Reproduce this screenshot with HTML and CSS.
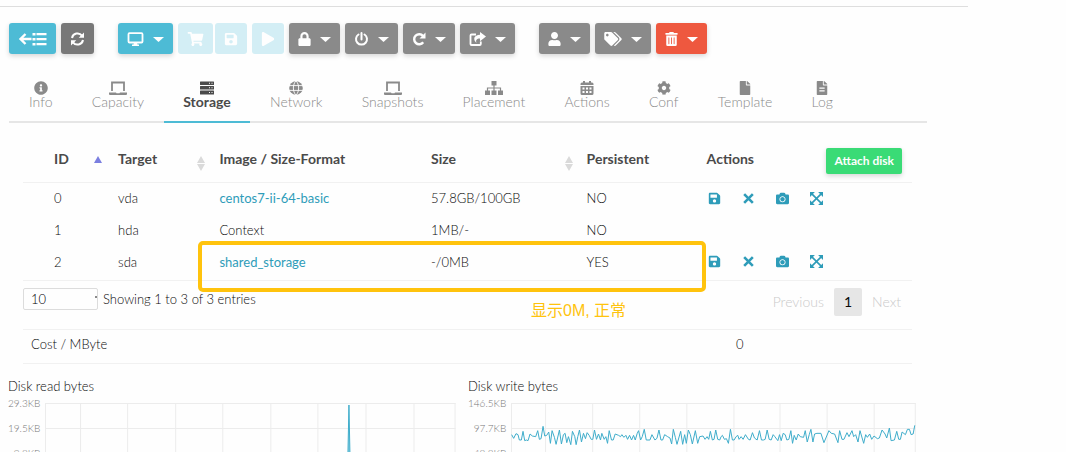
FILE: index.html
```html
<!DOCTYPE html>
<html lang="en">
<head>
<meta charset="utf-8">
<title>Virtual machine storage</title>
<link rel="stylesheet" href="styles.css">
</head>
<body>
<svg class="sprite" aria-hidden="true">
  <symbol id="back" viewBox="0 0 28 14"><path d="M13 7H2M7 2L2 7l5 5" fill="none" stroke="currentColor" stroke-width="2.4"/><path d="M14 1h3v2.500h-3zM14 6h3v2.500h-3zM14 11h3v2.500h-3zM18 1h10v2.200H18zM18 6h10v2.200H18zM18 11h10v2.200H18z"/></symbol>
  <symbol id="sync" viewBox="0 0 14 14"><path d="M1.500 6A5.600 5.600 0 0 1 11.500 3.700M12.500 8A5.600 5.600 0 0 1 2.500 10.300" fill="none" stroke="currentColor" stroke-width="2"/><path d="M13.500.5v5.300H8.200zM.5 13.500V8.200h5.300z"/></symbol>
  <symbol id="desktop" viewBox="0 0 17 14"><path d="M2.500 1.200h12q1 0 1 1v7.300q0 1-1 1h-12q-1 0-1-1V2.200q0-1 1-1z" fill="none" stroke="currentColor" stroke-width="1.800"/><path d="M7 10.500h3l.5 2h1.500V14H5v-1.500h1.500z"/></symbol>
  <symbol id="cart" viewBox="0 0 576 512"><path d="M528.120 301.319l47.273-208C578.806 78.301 567.391 64 551.990 64H159.208l-9.166-44.810C147.758 8.021 137.930 0 126.529 0H24C10.745 0 0 10.745 0 24v16c0 13.255 10.745 24 24 24h69.883l70.248 343.435C147.325 417.100 136 435.222 136 456c0 30.928 25.072 56 56 56s56-25.072 56-56c0-15.674-6.447-29.835-16.824-40h209.647C430.447 426.165 424 440.326 424 456c0 30.928 25.072 56 56 56s56-25.072 56-56c0-22.172-12.888-41.332-31.579-50.405l5.517-24.276c3.413-15.018-8.002-29.319-23.403-29.319H218.117l-6.545-32h293.145c11.206 0 20.920-7.754 23.403-18.681z"/></symbol>
  <symbol id="save" viewBox="0 0 448 512"><path d="M433.941 129.941l-83.882-83.882A48 48 0 0 0 316.118 32H48C21.490 32 0 53.490 0 80v352c0 26.510 21.490 48 48 48h352c26.510 0 48-21.490 48-48V163.882a48 48 0 0 0-14.059-33.941zM224 416c-35.346 0-64-28.654-64-64 0-35.346 28.654-64 64-64s64 28.654 64 64c0 35.346-28.654 64-64 64zm96-304.520V212c0 6.627-5.373 12-12 12H76c-6.627 0-12-5.373-12-12V108c0-6.627 5.373-12 12-12h228.520c3.183 0 6.235 1.264 8.485 3.515l3.480 3.480A11.996 11.996 0 0 1 320 111.480z"/></symbol>
  <symbol id="play" viewBox="0 0 448 512"><path d="M424.400 214.700L72.400 6.600C43.800-10.300 0 6.100 0 47.900V464c0 37.500 40.700 60.100 72.400 41.300l352-208c31.400-18.500 31.500-64.100 0-82.600z"/></symbol>
  <symbol id="lock" viewBox="0 0 448 512"><path d="M400 224h-24v-72C376 68.200 307.800 0 224 0S72 68.200 72 152v72H48c-26.500 0-48 21.500-48 48v192c0 26.500 21.500 48 48 48h352c26.500 0 48-21.500 48-48V272c0-26.500-21.500-48-48-48zm-104 0H152v-72c0-39.700 32.300-72 72-72s72 32.300 72 72v72z"/></symbol>
  <symbol id="power" viewBox="0 0 14 14"><path d="M4 2.500a5.500 5.500 0 1 0 6 0M7 1v6.500" fill="none" stroke="currentColor" stroke-width="2" stroke-linecap="round"/></symbol>
  <symbol id="redo" viewBox="0 0 14 14"><path d="M11 4a5 5 0 1 0 .2 6.200" fill="none" stroke="currentColor" stroke-width="2.400"/><path d="M13.500.5v6H7.500z"/></symbol>
  <symbol id="share" viewBox="0 0 17 14"><path d="M7 2.500H2.500q-1 0-1 1V12q0 1 1 1h8.300q1 0 1-1V9.500" fill="none" stroke="currentColor" stroke-width="1.800"/><path d="M11 0l6 4.600-6 4.600V6.500C7.500 6.500 6.500 8 7.500 11 3.500 7.500 5 3 11 2.800z"/></symbol>
  <symbol id="user" viewBox="0 0 448 512"><path d="M224 256c70.700 0 128-57.300 128-128S294.700 0 224 0 96 57.300 96 128s57.300 128 128 128zm89.600 32h-16.700c-22.200 10.200-46.900 16-72.900 16s-50.600-5.800-72.900-16h-16.700C60.200 288 0 348.200 0 422.400V464c0 26.500 21.500 48 48 48h352c26.500 0 48-21.500 48-48v-41.600c0-74.200-60.200-134.400-134.400-134.400z"/></symbol>
  <symbol id="tags" viewBox="0 0 640 512"><path d="M497.941 225.941L286.059 14.059A48 48 0 0 0 252.118 0H48C21.490 0 0 21.490 0 48v204.118a48 48 0 0 0 14.059 33.941l211.882 211.882c18.744 18.745 49.136 18.746 67.882 0l204.118-204.118c18.745-18.745 18.745-49.137 0-67.882zM112 160c-26.510 0-48-21.490-48-48s21.490-48 48-48 48 21.490 48 48-21.490 48-48 48zm513.941 133.823L421.823 497.941c-18.745 18.745-49.137 18.745-67.882 0l-.36-.36L527.640 323.522c16.999-16.999 26.362-39.600 26.362-63.640s-9.362-46.641-26.362-63.640L331.397 0h48.721a48 48 0 0 1 33.941 14.059l211.882 211.882c18.745 18.745 18.745 49.137 0 67.882z"/></symbol>
  <symbol id="trash" viewBox="0 0 448 512"><path d="M32 464a48 48 0 0 0 48 48h288a48 48 0 0 0 48-48V128H32zm272-256a16 16 0 0 1 32 0v224a16 16 0 0 1-32 0zm-96 0a16 16 0 0 1 32 0v224a16 16 0 0 1-32 0zm-96 0a16 16 0 0 1 32 0v224a16 16 0 0 1-32 0zM432 32H312l-9.400-18.700A24 24 0 0 0 281.100 0H166.800a23.720 23.720 0 0 0-21.400 13.300L136 32H16A16 16 0 0 0 0 48v32a16 16 0 0 0 16 16h416a16 16 0 0 0 16-16V48a16 16 0 0 0-16-16z"/></symbol>
  <symbol id="caret" viewBox="0 0 11 5"><path d="M0 0h11L5.500 5z"/></symbol>
  <symbol id="info" viewBox="0 0 512 512"><path d="M256 8C119.043 8 8 119.083 8 256c0 136.997 111.043 248 248 248s248-111.003 248-248C504 119.083 392.957 8 256 8zm0 110c23.196 0 42 18.804 42 42s-18.804 42-42 42-42-18.804-42-42 18.804-42 42-42zm56 254c0 6.627-5.373 12-12 12h-88c-6.627 0-12-5.373-12-12v-24c0-6.627 5.373-12 12-12h12v-64h-12c-6.627 0-12-5.373-12-12v-24c0-6.627 5.373-12 12-12h64c6.627 0 12 5.373 12 12v100h12c6.627 0 12 5.373 12 12v24z"/></symbol>
  <symbol id="laptop" viewBox="0 0 18 14"><path d="M3 10V1.500h12V10" fill="none" stroke="currentColor" stroke-width="1.800"/><path d="M0 11.500h7l.5.800h3l.5-.8h7V13q0 1-1 1H1q-1 0-1-1z"/></symbol>
  <symbol id="server" viewBox="0 0 14 14"><path fill-rule="evenodd" d="M.5.5h13q.5 0 .5.500v2.500q0 .5-.5.500H.5Q0 4 0 3.500V1Q0 .5.5.5zM9 1.700v1h1v-1zm2.500 0v1h1v-1zM.5 5h13q.5 0 .5.500V8q0 .5-.5.500H.5Q0 8.500 0 8V5.500Q0 5 .5 5zM9 6.200v1h1v-1zm2.500 0v1h1v-1zM.5 9.500h13q.5 0 .5.500v3q0 .5-.5.500H.5Q0 13.500 0 13v-3q0-.5.5-.5zM9 11v1h1v-1zm2.500 0v1h1v-1z"/></symbol>
  <symbol id="globe" viewBox="0 0 14 14"><circle cx="7" cy="7" r="6.800"/><path d="M0 4.600h14M0 9.400h14M7 0C3.500 3 3.500 11 7 14M7 0c3.500 3 3.500 11 0 14" fill="none" stroke="#fefefe" stroke-width=".9"/></symbol>
  <symbol id="sitemap" viewBox="0 0 18 14"><path d="M6.500 0h5v4.500h-5zM0 9.500h5V14H0zM6.500 9.500h5V14h-5zM13 9.500h5V14h-5z"/><path d="M9 4v6M2.500 10V7h13v3" fill="none" stroke="currentColor" stroke-width="1.200"/></symbol>
  <symbol id="calendar" viewBox="0 0 13 14"><path fill-rule="evenodd" d="M2.500 0h2v1.500h4V0h2v1.500h1Q13 1.500 13 3v1H0V3q0-1.500 1.500-1.500h1zM0 5h13v7.500q0 1.500-1.500 1.500h-10Q0 14 0 12.500zM2 6.500v2h2v-2zm3.500 0v2h2v-2zm3.500 0v2h2v-2zM2 10v2h2v-2zm3.500 0v2h2v-2zM9 10v2h2v-2z"/></symbol>
  <symbol id="cog" viewBox="0 0 512 512"><path d="M487.400 315.700l-42.600-24.600c4.300-23.200 4.300-47 0-70.200l42.600-24.600c4.900-2.800 7.100-8.600 5.500-14-11.100-35.600-30-67.800-54.700-94.600-3.800-4.100-10-5.100-14.800-2.300L380.800 110c-17.900-15.400-38.500-27.300-60.800-35.100V25.800c0-5.600-3.900-10.500-9.400-11.700-36.700-8.200-74.300-7.800-109.200 0-5.500 1.200-9.400 6.100-9.400 11.700V75c-22.200 7.900-42.800 19.800-60.800 35.100L88.700 85.500c-4.900-2.800-11-1.900-14.800 2.300-24.700 26.700-43.600 58.900-54.700 94.600-1.700 5.400.6 11.200 5.500 14L67.300 221c-4.300 23.200-4.300 47 0 70.200l-42.600 24.600c-4.900 2.800-7.100 8.600-5.500 14 11.100 35.600 30 67.800 54.700 94.600 3.800 4.100 10 5.100 14.800 2.300l42.600-24.600c17.900 15.400 38.500 27.300 60.800 35.100v49.200c0 5.600 3.900 10.500 9.400 11.700 36.700 8.200 74.300 7.800 109.200 0 5.500-1.200 9.400-6.100 9.400-11.700v-49.200c22.200-7.900 42.800-19.800 60.800-35.100l42.600 24.600c4.900 2.800 11 1.900 14.800-2.300 24.700-26.700 43.600-58.900 54.700-94.600 1.500-5.500-.7-11.300-5.600-14.100zM256 336c-44.100 0-80-35.900-80-80s35.900-80 80-80 80 35.900 80 80-35.900 80-80 80z"/></symbol>
  <symbol id="file" viewBox="0 0 384 512"><path d="M224 136V0H24C10.700 0 0 10.700 0 24v464c0 13.300 10.700 24 24 24h336c13.300 0 24-10.700 24-24V160H248c-13.200 0-24-10.800-24-24zm160-14.100v6.100H256V0h6.100c6.400 0 12.500 2.500 17 7l97.900 98c4.500 4.500 7 10.600 7 16.900z"/></symbol>
  <symbol id="filetext" viewBox="0 0 384 512"><path d="M224 136V0H24C10.700 0 0 10.700 0 24v464c0 13.300 10.700 24 24 24h336c13.300 0 24-10.700 24-24V160H248c-13.200 0-24-10.800-24-24zm160-14.100v6.100H256V0h6.100c6.400 0 12.500 2.500 17 7l97.900 98c4.500 4.500 7 10.600 7 16.900z"/><path d="M96 260h192M96 360h192" stroke="#fefefe" stroke-width="40"/></symbol>
  <symbol id="times" viewBox="0 0 12 12"><path d="M2 2l8 8M10 2l-8 8" stroke="currentColor" stroke-width="2.400"/></symbol>
  <symbol id="camera" viewBox="0 0 512 512"><path d="M512 144v288c0 26.500-21.500 48-48 48H48c-26.500 0-48-21.500-48-48V144c0-26.500 21.500-48 48-48h88l12.300-32.900c7-18.700 24.900-31.100 44.900-31.100h125.500c20 0 37.900 12.400 44.900 31.100L376 96h88c26.500 0 48 21.500 48 48zM376 288c0-66.200-53.800-120-120-120s-120 53.800-120 120 53.800 120 120 120 120-53.800 120-120zm-32 0c0 48.500-39.500 88-88 88s-88-39.500-88-88 39.500-88 88-88 88 39.500 88 88z"/></symbol>
  <symbol id="expand" viewBox="0 0 12 12"><path d="M0 0h4.500L0 4.500zM12 0v4.500L7.500 0zM0 12V7.500L4.500 12zM12 12H7.500L12 7.500z"/><path d="M1 1l10 10M11 1L1 11" stroke="currentColor" stroke-width="1.500"/></symbol>
  <symbol id="sort" viewBox="0 0 8 15"><path d="M0 7l4-7 4 7zM0 8h8l-4 7z"/></symbol>
  <symbol id="sortup" viewBox="0 0 8 15"><path d="M0 7l4-7 4 7z"/></symbol>
</svg>

<main class="page">
  <div class="toolbar">
    <div class="group">
      <button class="btn primary" aria-label="Back to list"><svg class="w29"><use href="#back"/></svg></button>
      <button class="btn dark" aria-label="Refresh"><svg class="w15"><use href="#sync"/></svg></button>
    </div>
    <div class="group">
      <button class="btn primary" aria-label="Console"><svg class="w17"><use href="#desktop"/></svg><svg class="caret"><use href="#caret"/></svg></button>
      <div class="pair">
        <button class="btn primary" disabled aria-label="Instantiate"><svg class="w17"><use href="#cart"/></svg></button>
        <button class="btn primary" disabled aria-label="Save"><svg class="w14"><use href="#save"/></svg></button>
      </div>
      <button class="btn primary" disabled aria-label="Play"><svg class="w14"><use href="#play"/></svg></button>
      <button class="btn" aria-label="Lock"><svg class="w13"><use href="#lock"/></svg><svg class="caret"><use href="#caret"/></svg></button>
      <button class="btn" aria-label="Power"><svg class="w15"><use href="#power"/></svg><svg class="caret"><use href="#caret"/></svg></button>
      <button class="btn" aria-label="Reboot"><svg class="w14"><use href="#redo"/></svg><svg class="caret"><use href="#caret"/></svg></button>
      <button class="btn" aria-label="Migrate"><svg class="w17"><use href="#share"/></svg><svg class="caret"><use href="#caret"/></svg></button>
    </div>
    <div class="group">
      <button class="btn" aria-label="Ownership"><svg class="w13"><use href="#user"/></svg><svg class="caret"><use href="#caret"/></svg></button>
      <button class="btn" aria-label="Labels"><svg class="w18"><use href="#tags"/></svg><svg class="caret"><use href="#caret"/></svg></button>
      <button class="btn danger" aria-label="Terminate"><svg class="w13"><use href="#trash"/></svg><svg class="caret"><use href="#caret"/></svg></button>
    </div>
  </div>

  <nav class="tabs">
    <a href="#"><svg><use href="#info"/></svg>Info</a>
    <a href="#"><svg><use href="#laptop"/></svg>Capacity</a>
    <a href="#" class="active" aria-current="page"><svg><use href="#server"/></svg>Storage</a>
    <a href="#"><svg><use href="#globe"/></svg>Network</a>
    <a href="#"><svg><use href="#laptop"/></svg>Snapshots</a>
    <a href="#"><svg><use href="#sitemap"/></svg>Placement</a>
    <a href="#"><svg><use href="#calendar"/></svg>Actions</a>
    <a href="#"><svg><use href="#cog"/></svg>Conf</a>
    <a href="#"><svg><use href="#file"/></svg>Template</a>
    <a href="#"><svg><use href="#filetext"/></svg>Log</a>
  </nav>

  <section class="storage">
    <table class="disks">
      <colgroup><col class="c-id"><col class="c-target"><col class="c-image"><col class="c-size"><col class="c-persistent"><col></colgroup>
      <thead>
        <tr>
          <th><div class="head">ID<svg class="on"><use href="#sortup"/></svg></div></th>
          <th><div class="head">Target<svg><use href="#sort"/></svg></div></th>
          <th>Image / Size-Format</th>
          <th><div class="head">Size<svg><use href="#sort"/></svg></div></th>
          <th>Persistent</th>
          <th><div class="head">Actions<button class="attach">Attach disk</button></div></th>
        </tr>
      </thead>
      <tbody>
        <tr><td>0</td><td>vda</td><td><a href="#">centos7-ii-64-basic</a></td><td>57.8GB/100GB</td><td>NO</td>
          <td><div class="acts"><a href="#" aria-label="Save as"><svg><use href="#save"/></svg></a><a href="#" aria-label="Detach"><svg><use href="#times"/></svg></a><a href="#" aria-label="Snapshot"><svg><use href="#camera"/></svg></a><a href="#" aria-label="Resize"><svg><use href="#expand"/></svg></a></div></td></tr>
        <tr><td>1</td><td>hda</td><td>Context</td><td>1MB/-</td><td>NO</td><td></td></tr>
        <tr><td>2</td><td>sda</td><td><a href="#">shared_storage</a></td><td>-/0MB</td><td>YES</td>
          <td><div class="acts"><a href="#" aria-label="Save as"><svg><use href="#save"/></svg></a><a href="#" aria-label="Detach"><svg><use href="#times"/></svg></a><a href="#" aria-label="Snapshot"><svg><use href="#camera"/></svg></a><a href="#" aria-label="Resize"><svg><use href="#expand"/></svg></a></div></td></tr>
      </tbody>
    </table>
    <div class="marker"></div>
    <div class="note">显示0M, 正常</div>

    <div class="paging">
      <label class="length"><select aria-label="Rows per page"><option>10</option><option>25</option></select></label>
      <span class="summary">Showing 1 to 3 of 3 entries</span>
      <div class="pages"><button disabled>Previous</button><button class="current">1</button><button disabled>Next</button></div>
    </div>

    <table class="cost"><tbody><tr><td>Cost / MByte</td><td>0</td></tr></tbody></table>
  </section>

  <section class="charts">
    <figure>
      <figcaption>Disk read bytes</figcaption>
      <div class="chart">
        <div class="ticks"><span>29.3KB</span><span>19.5KB</span><span>9.8KB</span><span>0KB</span></div>
        <svg viewBox="0 0 410 76" preserveAspectRatio="none">
          <path class="grid" d="M0 .5h410M0 25.500h410M0 50.500h410M0 75.500h410M.5 0v76M35.500 0v76M82.500 0v76M130.500 0v76M177.500 0v76M225.500 0v76M272.500 0v76M320.500 0v76M368.500 0v76M409.500 0v76"/>
          <path class="area" d="M302 75L303.500 2 305 75z"/>
          <path class="line" d="M0 75H302L303.500 2 305 75H410"/>
        </svg>
      </div>
    </figure>
    <figure>
      <figcaption>Disk write bytes</figcaption>
      <div class="chart">
        <div class="ticks"><span>146.5KB</span><span>97.7KB</span><span>48.8KB</span><span>0KB</span></div>
        <svg viewBox="0 0 1212 228" preserveAspectRatio="none">
          <path class="grid" d="M0 1.500h1212M0 76.500h1212M0 151.500h1212M0 226.500h1212M1.500 0v228M103.500 0v228M244.500 0v228M385.500 0v228M526.500 0v228M667.500 0v228M805.500 0v228M946.500 0v228M1087.500 0v228M1210.500 0v228"/>
          <polyline class="line" transform="translate(-6 51)" points="8,44 14,55 21,41 27,44 31,60 37,60 42,34 47,62 52,60 57,62 63,42 70,48 80,50 86,32 91,58 96,56 102,19 107,48 113,46 119,36 124,70 129,32 136,52 141,73 151,30 157,72 163,44 168,40 173,68 178,50 185,74 190,34 197,50 201,74 206,50 211,30 217,66 223,40 229,56 234,38 240,46 246,58 251,58 256,30 262,58 268,42 274,60 278,40 285,58 290,50 295,70 300,32 307,60 312,60 318,42 328,46 334,50 338,44 344,52 350,46 355,58 361,46 367,60 373,46 378,60 384,40 388,32 394,60 399,50 405,28 411,60"/>
          <polyline class="line" transform="translate(399 51)" points="6,60 17,60 23,44 32,60 38,55 44,30 50,60 55,60 61,44 70,50 77,54 82,72 87,28 93,52 98,73 109,34 115,73 121,44 126,70 132,30 138,44 144,72 153,32 160,70 166,50 176,48 182,58 188,50 193,58 198,34 204,60 209,58 214,30 220,58 226,60 230,50 234,46 240,58 246,56 252,70 258,28 264,60 269,60 275,50 280,46 284,58 290,50 296,58 303,44 312,58 317,60 324,38 330,54 338,60 345,32 351,60 357,60 362,58 368,30 374,58 380,60 386,44 391,50 400,62 405,44 410,62"/>
          <polyline class="line" transform="translate(804 51)" points="5,62 11,40 17,44 22,60 28,58 34,32 39,70 44,46 50,60 56,42 62,50 72,52 77,32 83,66 89,44 94,28 100,66 105,42 112,40 124,40 133,68 148,32 155,40 165,42 175,68 180,32 187,58 193,58 202,38 208,50 217,32 222,50 228,44 235,66 241,32 252,70 258,44 263,52 270,42 276,58 283,48 293,56 299,54 307,30 316,42 321,54 329,24 334,62 344,60 351,34 357,58 362,58 367,36 377,44 383,28 389,28 394,44 400,42 405,16"/>
        </svg>
      </div>
    </figure>
  </section>
</main>
</body>
</html>
```
FILE: styles.css
```css
* { box-sizing: border-box; }

body {
  margin: 0;
  height: 100vh;
  overflow: hidden;
  background: #fefefe;
  color: #0a0a0a;
  font: 300 13px/20px Lato, "Noto Sans CJK SC", sans-serif;
}

svg { display: block; fill: currentColor; }
a { color: #2e9cb9; text-decoration: none; }
button, select { font: inherit; }

.sprite { position: absolute; width: 0; height: 0; }

.page {
  margin-top: 6px;
  margin-right: 98px;
  padding-top: 16px;
  border-top: 1px solid #dedede;
}

.toolbar { display: flex; gap: 24px; margin-left: 9px; }
.group { display: flex; gap: 5px; }
.pair { display: flex; gap: 2px; }

.btn {
  display: flex;
  align-items: center;
  justify-content: center;
  gap: 9px;
  height: 31px;
  padding: 0 9px;
  border: 0;
  border-radius: 3px;
  background: #8a8a8a;
  color: #fefefe;
  box-shadow: 0 2px 5px rgba(0, 0, 0, .16);
}
.btn svg { height: 14px; }
.btn .caret { width: 11px; height: 5px; margin-top: 2px; }
.btn.primary { background: #4dbbd5; }
.btn.dark { background: #787878; }
.btn.danger { background: #ee583f; }
.btn:disabled { background: #d3eef5; box-shadow: none; }
.w13 { width: 13px; }
.w14 { width: 14px; }
.w15 { width: 15px; }
.w17 { width: 17px; }
.w18 { width: 18px; }
.w29 { width: 29px; }

.tabs {
  display: flex;
  justify-content: space-between;
  margin: 20px 41px 0 9px;
  padding: 0 75px 0 1px;
  border-bottom: 2px solid #e6e6e6;
}
.tabs a {
  display: flex;
  flex-direction: column;
  align-items: center;
  margin-bottom: -2px;
  padding: 7px 19px 12px;
  border-bottom: 2px solid transparent;
  color: #8a8a8a;
  font-size: 14px;
  line-height: 14px;
}
.tabs svg { width: 18px; height: 14px; }
.tabs .active {
  border-color: #4dbbd5;
  color: #4a4a4a;
  font-weight: 700;
}

.storage { position: relative; margin: 16px 56px 0 23px; }

table { width: 100%; border-collapse: collapse; table-layout: fixed; }
.disks { border-bottom: 1px solid #f1f1f1; }
.c-id { width: 9.8%; }
.c-target { width: 11.4%; }
.c-image { width: 23.8%; }
.c-size { width: 17.5%; }
.c-persistent { width: 13.5%; }

th, td { padding: 0 8px; text-align: left; }
th:first-child, .disks td:first-child { padding-left: 31px; }
thead { border-bottom: 1px solid #f1f1f1; }
th { height: 43px; padding-bottom: 2px; color: #4a4a4a; font-size: 14px; font-weight: 700; }
.disks td { height: 32px; }
.disks tr:last-child td { height: 34px; padding-bottom: 2px; }
.disks td a { font-weight: 400; }
.head { display: flex; align-items: center; justify-content: space-between; }
.head svg { width: 8px; height: 15px; margin-top: 8px; margin-right: -2px; color: #dadada; }
.head .on { margin-right: 0; color: #7b7fe0; }

.attach {
  height: 26px;
  margin: 4px 2px 0 0;
  padding: 0 8px;
  border: 0;
  border-radius: 2px;
  background: #3adb76;
  color: #fefefe;
  font-size: 12px;
  font-weight: 700;
  box-shadow: 0 2px 5px rgba(0, 0, 0, .16);
}

.acts { display: flex; gap: 19px; }
.acts a { width: 15px; }
.acts svg { width: 15px; height: 13px; }

/* Highlight and note drawn over the table */
.marker {
  position: absolute;
  left: 175px;
  top: 102px;
  width: 508px;
  height: 51px;
  border: 4px solid #ffc30d;
  border-radius: 5px;
}
.note {
  position: absolute;
  left: 508px;
  top: 162px;
  color: #ffc30d;
  font: 400 16px/20px "Liberation Sans", "Noto Sans CJK SC", sans-serif;
}

.paging { display: flex; align-items: flex-start; padding: 7px 1px 13px 0; }
.length select {
  display: block;
  width: 75px;
  height: 22px;
  padding: 0 7px;
  border: 1px solid #dcdcdc;
  border-radius: 2px;
  appearance: none;
  background: linear-gradient(#8a8a8a, #8a8a8a) right 7px / 2px 2px no-repeat #fefefe;
  font-weight: 300;
}
.summary { margin-left: 5px; line-height: 22px; }
.pages { display: flex; margin-left: auto; }
.pages button {
  height: 28px;
  padding: 0 10px;
  border: 0;
  border-radius: 2px;
  background: none;
  color: #cacaca;
  font-size: 14px;
}
.pages .current { background: #e6e6e6; color: #0a0a0a; font-weight: 400; }

.cost { border-top: 1px solid #f1f1f1; border-bottom: 1px solid #f1f1f1; }
.cost td { height: 34px; padding-bottom: 4px; }
.cost td:first-child { width: 79.3%; }

.charts { display: flex; margin: 12px 40px 0 8px; }
figure { flex: 1; min-width: 0; margin: 0; }
.chart { display: flex; gap: 5px; padding: 7px 12px 0 0; }
.chart svg { flex: 1; min-width: 0; height: 76px; }
.ticks { display: flex; flex-direction: column; gap: 5px; margin-top: -10px; color: #777; font-size: 10px; text-align: right; }
.grid { fill: none; stroke: #ececec; stroke-width: 1; vector-effect: non-scaling-stroke; }
.line { fill: none; stroke: #3fadcb; stroke-width: 1; vector-effect: non-scaling-stroke; }
.area { fill: #8fd0e2; }
```
